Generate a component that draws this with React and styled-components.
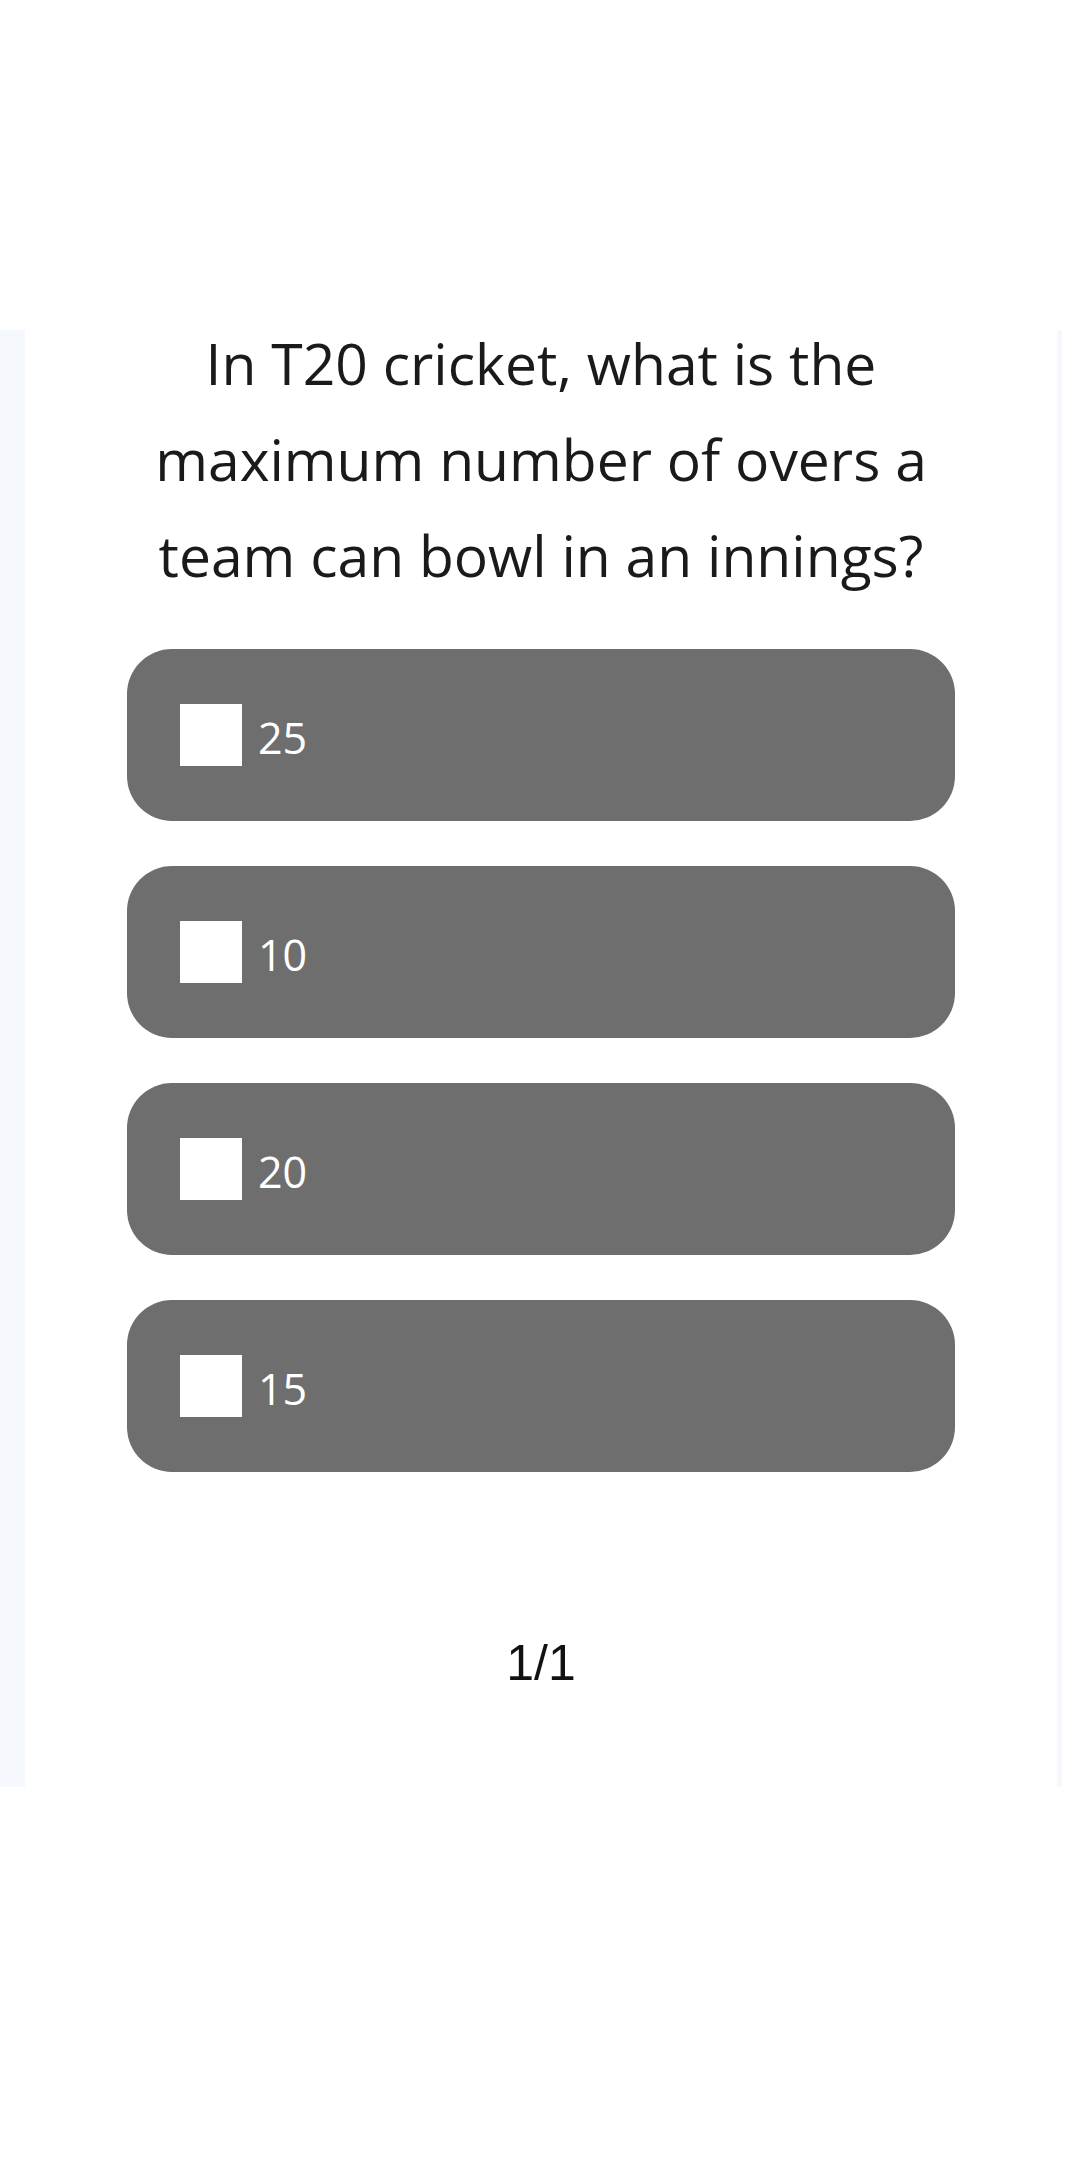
import React from 'react';
import styled, { createGlobalStyle } from 'styled-components';

const GlobalStyle = createGlobalStyle`
    html, body {
        margin: 0;
        padding: 0;
        background: #ffffff;
    }
    body {
        font-family: "Open Sans", "Liberation Sans", sans-serif;
    }
`;

const quiz = {
    pregunta: 'In T20 cricket, what is the maximum number of overs a team can bowl in an innings?',
    opciones: ['25', '10', '20', '15'],
    actual: 1,
    total: 1,
};

const App = () => {
    return (
        <>
            <GlobalStyle />
            <Pagina>
                <Panel>
                    <Tarjeta>
                        <Pregunta>{quiz.pregunta}</Pregunta>
                        <ListaOpciones>
                            {quiz.opciones.map((opcion) => (
                                <Opcion key={opcion}>
                                    <Casilla />
                                    <TextoOpcion>{opcion}</TextoOpcion>
                                </Opcion>
                            ))}
                        </ListaOpciones>
                        <Contador>{quiz.actual}/{quiz.total}</Contador>
                    </Tarjeta>
                </Panel>
            </Pagina>
        </>
    );
};

export default App;

const Pagina = styled.div`
    width: 1080px;
    min-height: 2160px;
    padding-top: 330px;
    box-sizing: border-box;
    background: #ffffff;
`;

const Panel = styled.div`
    width: 1062px;
    padding: 0 5px 0 25px;
    box-sizing: border-box;
    background: #f5f9fd;
`;

const Tarjeta = styled.div`
    background: #ffffff;
    display: flex;
    flex-direction: column;
    align-items: center;
    padding-bottom: 95px;
`;

const Pregunta = styled.h1`
    margin: -15px 0 0;
    width: 828px;
    font-family: "Open Sans", sans-serif;
    font-weight: 400;
    font-size: 57px;
    line-height: 96px;
    text-align: center;
    color: #1a1a1a;
`;

const ListaOpciones = styled.div`
    margin-top: 46px;
    display: flex;
    flex-direction: column;
    gap: 45px;
`;

const Opcion = styled.div`
    width: 828px;
    height: 172px;
    box-sizing: border-box;
    padding-left: 53px;
    display: flex;
    align-items: center;
    gap: 16px;
    background: #6e6e6e;
    border-radius: 45px;
`;

const Casilla = styled.span`
    width: 62px;
    height: 62px;
    background: #ffffff;
`;

const TextoOpcion = styled.span`
    font-family: "Open Sans", sans-serif;
    font-size: 43px;
    line-height: 1;
    padding-top: 4px;
    color: #ffffff;
`;

const Contador = styled.div`
    margin-top: 162px;
    font-family: "Liberation Sans", Arial, sans-serif;
    font-size: 50px;
    color: #111111;
`;
